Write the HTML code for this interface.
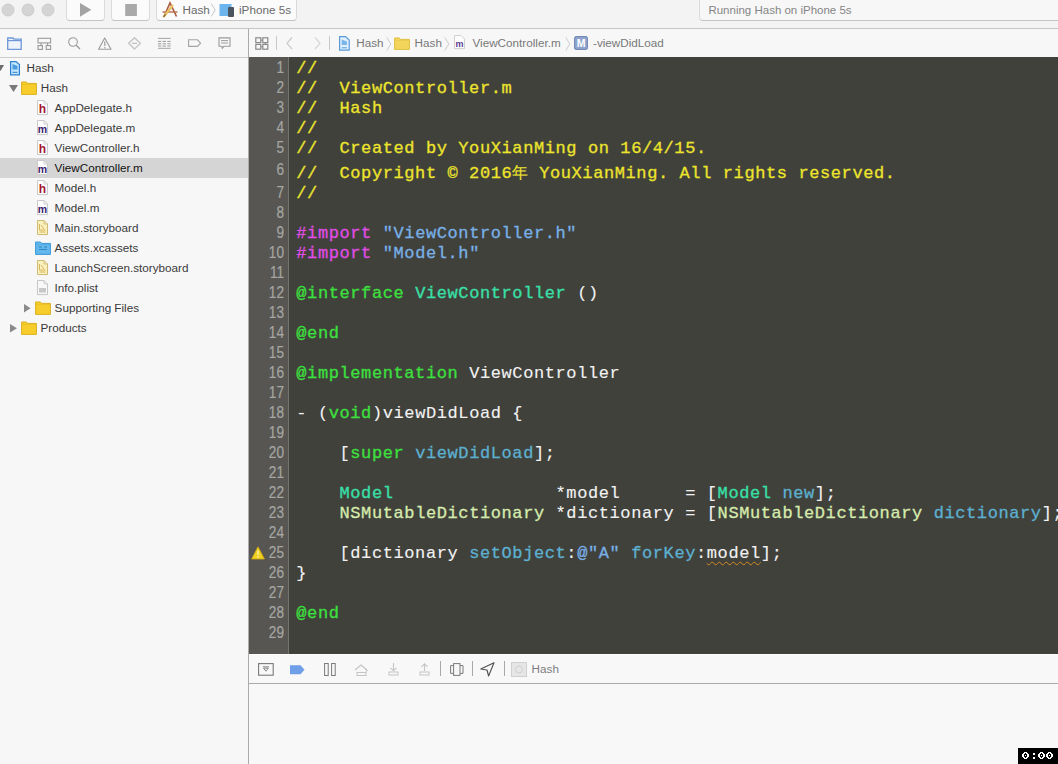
<!DOCTYPE html>
<html><head><meta charset="utf-8">
<style>
*{margin:0;padding:0;box-sizing:border-box}
html,body{width:1058px;height:764px;overflow:hidden;background:#f4f4f4;font-family:"Liberation Sans",sans-serif}
.a{position:absolute}
svg{position:absolute;overflow:visible}
#tb{left:0;top:0;width:1058px;height:29px;background:#f3f3f3;border-bottom:1px solid #c6c6c6}
#nav{left:0;top:29px;width:248px;height:29px;background:#f7f7f7;border-bottom:1px solid #cdcdcd}
#jump{left:249px;top:29px;width:809px;height:28px;background:#f7f7f7}
#vdiv{left:248px;top:29px;width:1px;height:735px;background:#ababab}
#side{left:0;top:58px;width:248px;height:706px;background:#f7f7f7}
#ed{left:249px;top:57px;width:809px;height:597px;background:#41413c}
#gut{left:249px;top:57px;width:40px;height:597px;background:#575652;border-right:1px solid #74736c}
.t{position:absolute;font-size:11.7px;color:#3a3a3a;line-height:14px;white-space:nowrap}
.g{color:#777}
.ln{position:absolute;left:249px;width:35px;text-align:right;font-size:16px;transform:scaleX(0.85);transform-origin:right center;color:#a6a6a2;line-height:20px;-webkit-text-stroke:0.2px currentColor}
.cl{position:absolute;margin-top:0.8px;left:296.3px;font-family:"Liberation Mono",monospace;font-size:17px;letter-spacing:0.6px;-webkit-text-stroke:0.12px currentColor;line-height:20px;white-space:pre;color:#f2f2f2}
.cm{-webkit-text-stroke:0.3px currentColor;color:#ede52c}
.cmcj{color:#ede52c;font-size:16px;letter-spacing:0}
.pp{-webkit-text-stroke:0.3px currentColor;color:#e04ce6}
.st{-webkit-text-stroke:0.3px currentColor;color:#78b0e6}
.kw{-webkit-text-stroke:0.3px currentColor;color:#3ce03c}
.ty{-webkit-text-stroke:0.3px currentColor;color:#38e0a8}
.fn{-webkit-text-stroke:0.3px currentColor;color:#5cb0d0}
.cls{-webkit-text-stroke:0.3px currentColor;color:#d6ebac}
.sq{text-decoration:underline wavy #d08a20;text-underline-offset:3px;text-decoration-thickness:1px}
#dbg{left:249px;top:654px;width:809px;height:30px;background:#f8f8f8;border-top:1px solid #fdfdfd;border-bottom:1px solid #ababab}
#con{left:249px;top:684px;width:809px;height:80px;background:#f8f8f8}
#timer{left:1018px;top:748px;width:40px;height:16px;background:#000}
.btn{position:absolute;top:-4px;height:25px;background:#fbfbfb;border:1px solid #dadada;border-bottom-color:#c4c4c4;border-radius:4px}
.sep{position:absolute;width:1px;background:#c9c9c9}
.sel{position:absolute;left:0;width:248px;height:20px;background:#d5d5d5}
</style></head><body>
<div id="tb" class="a"></div>
<div id="nav" class="a"></div>
<div id="jump" class="a"></div>
<div id="side" class="a"></div>
<div id="vdiv" class="a"></div>
<div id="ed" class="a"></div>
<div id="gut" class="a"></div>
<div id="dbg" class="a"></div>
<div id="con" class="a"></div>
<svg style="left:1px;top:3px" width="14" height="14" viewBox="0 0 14 14"><circle cx="7" cy="7" r="6" fill="#d4d4d4" stroke="#c6c6c6" stroke-width="0.8"/></svg>
<svg style="left:21px;top:3px" width="14" height="14" viewBox="0 0 14 14"><circle cx="7" cy="7" r="6" fill="#d4d4d4" stroke="#c6c6c6" stroke-width="0.8"/></svg>
<svg style="left:41px;top:3px" width="14" height="14" viewBox="0 0 14 14"><circle cx="7" cy="7" r="6" fill="#d4d4d4" stroke="#c6c6c6" stroke-width="0.8"/></svg>
<div class="btn" style="left:66px;width:39px"></div>
<svg style="left:79px;top:2px" width="14" height="16" viewBox="0 0 14 16"><path d="M1 1 L12.3 7.8 L1 14.7 Z" fill="#a3a3a3"/></svg>
<div class="btn" style="left:111px;width:39px"></div>
<svg style="left:125px;top:4px" width="12" height="12" viewBox="0 0 12 12"><rect x="0.2" y="0" width="11.7" height="12" fill="#a9a9a9"/></svg>
<div class="btn" style="left:156px;width:141px"></div>
<svg style="left:161px;top:1px" width="18" height="18" viewBox="0 0 18 18"><path d="M3 15.5 L9 2 L15.5 15.5" fill="none" stroke="#a85a40" stroke-width="1.6"/><path d="M1.5 11 L16.5 11" stroke="#b87050" stroke-width="1.4"/><path d="M2.5 16 L12 4" stroke="#e8c060" stroke-width="2.2"/><path d="M2.5 16 L4.5 13.5" stroke="#705030" stroke-width="1.2"/></svg>
<div class="t " style="left:182.5px;top:2.55px;font-size:11.7px;color:#6a6a6a">Hash</div>
<svg style="left:210px;top:3px" width="7" height="15" viewBox="0 0 7 15"><path d="M1.2 0.5 L5.2 7 L1.2 13.5" fill="none" stroke="#c8c8c8" stroke-width="1"/></svg>
<svg style="left:219px;top:3px" width="16" height="14" viewBox="0 0 16 14"><rect x="0.5" y="1" width="12" height="12" fill="#6cb4ec"/><rect x="9" y="4" width="6" height="10" rx="1" fill="#4a5560"/></svg>
<div class="t " style="left:239px;top:2.55px;font-size:11.7px;color:#6a6a6a">iPhone 5s</div>
<div class="btn" style="left:699px;width:400px;background:#f7f7f7"></div>
<div class="t " style="left:708.4px;top:3.33px;font-size:11.5px;color:#858585">Running Hash on iPhone 5s</div>
<svg style="left:7px;top:37px" width="15" height="13" viewBox="0 0 15 13"><path d="M0.7 1 H6 L7 2.2 H14.2 V12.3 H0.7 Z" fill="#eef3fb" stroke="#6d98d8" stroke-width="1.3"/><path d="M0.7 3.6 H14.2" stroke="#6d98d8" stroke-width="1.2"/></svg>
<svg style="left:37px;top:37px" width="15" height="13" viewBox="0 0 15 13"><rect x="1" y="1.3" width="12.6" height="4.6" fill="none" stroke="#9a9a9a" stroke-width="1.1"/><path d="M4 6 V8.3 M10.6 6 V8.3" stroke="#9a9a9a" stroke-width="1.1"/><rect x="1" y="8.6" width="4.4" height="3.8" fill="none" stroke="#9a9a9a" stroke-width="1.1"/><rect x="9.2" y="8.6" width="4.4" height="3.8" fill="none" stroke="#9a9a9a" stroke-width="1.1"/></svg>
<svg style="left:68px;top:37px" width="13" height="13" viewBox="0 0 13 13"><circle cx="5" cy="5" r="4.3" fill="none" stroke="#9a9a9a" stroke-width="1.1"/><path d="M8.2 8.2 L12 12" stroke="#9a9a9a" stroke-width="1.3"/></svg>
<svg style="left:98px;top:37px" width="14" height="13" viewBox="0 0 14 13"><path d="M6.7 1 L13 12.3 H0.6 Z" fill="none" stroke="#9a9a9a" stroke-width="1.1" stroke-linejoin="round"/><path d="M6.8 4.5 V9" stroke="#9a9a9a" stroke-width="1.2"/><circle cx="6.8" cy="10.7" r="0.7" fill="#9a9a9a"/></svg>
<svg style="left:128px;top:37px" width="14" height="13" viewBox="0 0 14 13"><path d="M6.5 0.8 L12.4 6.3 L6.5 12 L0.6 6.3 Z" fill="none" stroke="#c4c4c4" stroke-width="1.4" stroke-linejoin="round"/><path d="M4 6.3 H9" stroke="#b8b8b8" stroke-width="1.1"/></svg>
<svg style="left:157px;top:37px" width="15" height="13" viewBox="0 0 15 13"><path d="M1 1.4 H13.6 M1 11.3 H13.6" stroke="#9a9a9a" stroke-width="0.9"/><path d="M1 4.4 H4.3 M5.6 4.4 H9 M10.3 4.4 H13.6 M1 6.8 H4.3 M5.6 6.8 H9 M10.3 6.8 H13.6 M1 9 H4.3 M5.6 9 H9 M10.3 9 H13.6" stroke="#9a9a9a" stroke-width="1"/></svg>
<svg style="left:188px;top:39px" width="14" height="9" viewBox="0 0 14 9"><path d="M0.6 0.8 H9.5 L12.6 4.2 L9.5 7.4 H0.6 Z" fill="none" stroke="#a4a4a4" stroke-width="1.1"/></svg>
<svg style="left:218px;top:37px" width="13" height="13" viewBox="0 0 13 13"><path d="M1 0.9 H12 V9.3 H5.8 L4.3 11.3 L3.8 9.3 H1 Z" fill="none" stroke="#9a9a9a" stroke-width="1.1"/><path d="M3 3.6 H10 M3 6 H10" stroke="#9a9a9a" stroke-width="1"/></svg>
<div class="sel" style="top:158px"></div>
<svg style="left:-3px;top:65px" width="7" height="6" viewBox="0 0 7 6"><path d="M0 0 H7 L3.5 6 Z" fill="#6e6e6e"/></svg>
<svg style="left:10px;top:61px" width="10" height="15" viewBox="0 0 10 15"><path d="M0.6 0.6 H6 L9.4 3.5 V13.8 H0.6 Z" fill="#c4e8ff" stroke="#2c80d0" stroke-width="1.2"/><path d="M2.5 3 V8.5 H7.5 V5" fill="#4a9ae0" stroke="none"/><path d="M2.5 11.3 H7.5" stroke="#2c80d0" stroke-width="1"/></svg>
<div class="t " style="left:26.5px;top:60.65px;font-size:11.7px">Hash</div>
<svg style="left:9px;top:85px" width="9" height="7" viewBox="0 0 9 7"><path d="M0 0 H9 L4.5 7 Z" fill="#7a7a7a"/></svg>
<svg style="left:21px;top:81px" width="16" height="14" viewBox="0 0 16 14"><path d="M0.6 1 H5.5 L6.5 2.4 H15.4 V13.4 H0.6 Z" fill="#f6cd2a" stroke="#dcb020" stroke-width="1"/><path d="M0.6 3.4 H15.4" stroke="#dcb020" stroke-width="0.6" opacity="0.6"/></svg>
<div class="t " style="left:40.8px;top:80.65px;font-size:11.7px">Hash</div>
<svg style="left:37.3px;top:100.2px" width="11" height="15" viewBox="0 0 11 15"><path d="M0.5 0.5 H7 L10.5 4 V14.6 H0.5 Z" fill="#fdfdfd" stroke="#c9c9c9" stroke-width="1"/><path d="M7 0.5 V4 H10.5" fill="none" stroke="#c9c9c9" stroke-width="0.8"/><text x="5.5" y="12.6" text-anchor="middle" font-family="Liberation Sans" font-weight="bold" font-size="12" fill="#a3142d">h</text></svg>
<div class="t " style="left:54.6px;top:100.65px;font-size:11.7px">AppDelegate.h</div>
<svg style="left:37.3px;top:120.2px" width="11" height="15" viewBox="0 0 11 15"><path d="M0.5 0.5 H7 L10.5 4 V14.6 H0.5 Z" fill="#fdfdfd" stroke="#c9c9c9" stroke-width="1"/><path d="M7 0.5 V4 H10.5" fill="none" stroke="#c9c9c9" stroke-width="0.8"/><text x="5.5" y="12.8" text-anchor="middle" font-family="Liberation Sans" font-weight="bold" font-size="10.5" fill="#3b2170">m</text></svg>
<div class="t " style="left:54.6px;top:120.65px;font-size:11.7px">AppDelegate.m</div>
<svg style="left:37.3px;top:140.2px" width="11" height="15" viewBox="0 0 11 15"><path d="M0.5 0.5 H7 L10.5 4 V14.6 H0.5 Z" fill="#fdfdfd" stroke="#c9c9c9" stroke-width="1"/><path d="M7 0.5 V4 H10.5" fill="none" stroke="#c9c9c9" stroke-width="0.8"/><text x="5.5" y="12.6" text-anchor="middle" font-family="Liberation Sans" font-weight="bold" font-size="12" fill="#a3142d">h</text></svg>
<div class="t " style="left:54.6px;top:140.65px;font-size:11.7px">ViewController.h</div>
<svg style="left:37.3px;top:160.2px" width="11" height="15" viewBox="0 0 11 15"><path d="M0.5 0.5 H7 L10.5 4 V14.6 H0.5 Z" fill="#fdfdfd" stroke="#c9c9c9" stroke-width="1"/><path d="M7 0.5 V4 H10.5" fill="none" stroke="#c9c9c9" stroke-width="0.8"/><text x="5.5" y="12.8" text-anchor="middle" font-family="Liberation Sans" font-weight="bold" font-size="10.5" fill="#3b2170">m</text></svg>
<div class="t " style="left:54.6px;top:160.65px;font-size:11.7px;color:#111">ViewController.m</div>
<svg style="left:37.3px;top:180.2px" width="11" height="15" viewBox="0 0 11 15"><path d="M0.5 0.5 H7 L10.5 4 V14.6 H0.5 Z" fill="#fdfdfd" stroke="#c9c9c9" stroke-width="1"/><path d="M7 0.5 V4 H10.5" fill="none" stroke="#c9c9c9" stroke-width="0.8"/><text x="5.5" y="12.6" text-anchor="middle" font-family="Liberation Sans" font-weight="bold" font-size="12" fill="#a3142d">h</text></svg>
<div class="t " style="left:54.6px;top:180.65px;font-size:11.7px">Model.h</div>
<svg style="left:37.3px;top:200.2px" width="11" height="15" viewBox="0 0 11 15"><path d="M0.5 0.5 H7 L10.5 4 V14.6 H0.5 Z" fill="#fdfdfd" stroke="#c9c9c9" stroke-width="1"/><path d="M7 0.5 V4 H10.5" fill="none" stroke="#c9c9c9" stroke-width="0.8"/><text x="5.5" y="12.8" text-anchor="middle" font-family="Liberation Sans" font-weight="bold" font-size="10.5" fill="#3b2170">m</text></svg>
<div class="t " style="left:54.6px;top:200.65px;font-size:11.7px">Model.m</div>
<svg style="left:37.3px;top:220.2px" width="11" height="15" viewBox="0 0 11 15"><path d="M0.5 0.5 H7 L10.5 4 V14.6 H0.5 Z" fill="#faf0c0" stroke="#cfb870" stroke-width="1"/><path d="M7 0.5 V4 H10.5" fill="none" stroke="#cfb870" stroke-width="0.8"/><path d="M2.5 4 V10 H8.5 M2.5 12 H8.5" fill="none" stroke="#d6b65a" stroke-width="1"/><path d="M4 5 L7 9" stroke="#d6b65a" stroke-width="1"/></svg>
<div class="t " style="left:54.6px;top:220.65px;font-size:11.7px">Main.storyboard</div>
<svg style="left:35px;top:241px" width="16" height="14" viewBox="0 0 16 14"><path d="M0.6 1 H5.5 L6.5 2.4 H15.4 V13.4 H0.6 Z" fill="#62b8ec" stroke="#3a98d8" stroke-width="1"/><path d="M0.6 3.4 H15.4" stroke="#3a98d8" stroke-width="0.6" opacity="0.6"/></svg>
<svg style="left:38px;top:246px" width="10" height="6" viewBox="0 0 10 6"><path d="M1 1 H4 M6 1 H9 M1 3.5 H9" stroke="#2a78b8" stroke-width="0.8"/></svg>
<div class="t " style="left:54.6px;top:240.65px;font-size:11.7px">Assets.xcassets</div>
<svg style="left:37.3px;top:260.2px" width="11" height="15" viewBox="0 0 11 15"><path d="M0.5 0.5 H7 L10.5 4 V14.6 H0.5 Z" fill="#faf0c0" stroke="#cfb870" stroke-width="1"/><path d="M7 0.5 V4 H10.5" fill="none" stroke="#cfb870" stroke-width="0.8"/><path d="M2.5 4 V10 H8.5 M2.5 12 H8.5" fill="none" stroke="#d6b65a" stroke-width="1"/><path d="M4 5 L7 9" stroke="#d6b65a" stroke-width="1"/></svg>
<div class="t " style="left:54.6px;top:260.65px;font-size:11.7px">LaunchScreen.storyboard</div>
<svg style="left:37.3px;top:280.2px" width="11" height="15" viewBox="0 0 11 15"><path d="M0.5 0.5 H7 L10.5 4 V14.6 H0.5 Z" fill="#f8f8f8" stroke="#c6c6c6" stroke-width="1"/><path d="M7 0.5 V4 H10.5" fill="none" stroke="#c6c6c6" stroke-width="0.8"/><rect x="2" y="8" width="7" height="4.5" fill="#c8c8c8"/></svg>
<div class="t " style="left:54.6px;top:280.65px;font-size:11.7px">Info.plist</div>
<svg style="left:24.2px;top:304.2px" width="6.6" height="8.5" viewBox="0 0 6.6 8.5"><path d="M0 0 L6.6 4.25 L0 8.5 Z" fill="#8a8a8a"/></svg>
<svg style="left:34.7px;top:301px" width="16" height="14" viewBox="0 0 16 14"><path d="M0.6 1 H5.5 L6.5 2.4 H15.4 V13.4 H0.6 Z" fill="#f6cd2a" stroke="#dcb020" stroke-width="1"/><path d="M0.6 3.4 H15.4" stroke="#dcb020" stroke-width="0.6" opacity="0.6"/></svg>
<div class="t " style="left:54.6px;top:300.65px;font-size:11.7px">Supporting Files</div>
<svg style="left:10px;top:324px" width="7" height="8.6" viewBox="0 0 7 8.6"><path d="M0 0 L7 4.3 L0 8.6 Z" fill="#8a8a8a"/></svg>
<svg style="left:20.7px;top:321px" width="16" height="14" viewBox="0 0 16 14"><path d="M0.6 1 H5.5 L6.5 2.4 H15.4 V13.4 H0.6 Z" fill="#f6cd2a" stroke="#dcb020" stroke-width="1"/><path d="M0.6 3.4 H15.4" stroke="#dcb020" stroke-width="0.6" opacity="0.6"/></svg>
<div class="t " style="left:40.5px;top:320.65px;font-size:11.7px">Products</div>
<svg style="left:254.5px;top:37px" width="14" height="13" viewBox="0 0 14 13"><rect x="0.8" y="0.8" width="5" height="4.8" fill="none" stroke="#8a8a8a" stroke-width="1.2"/><rect x="7.8" y="0.8" width="5" height="4.8" fill="none" stroke="#8a8a8a" stroke-width="1.2"/><rect x="0.8" y="7.4" width="5" height="4.8" fill="none" stroke="#8a8a8a" stroke-width="1.2"/><rect x="7.8" y="7.4" width="5" height="4.8" fill="none" stroke="#8a8a8a" stroke-width="1.2"/><path d="M5.8 3.2 H7.8 M5.8 9.8 H7.8 M10.3 5.6 V7.4" stroke="#8a8a8a" stroke-width="1"/></svg>
<div class="sep" style="left:276px;top:36px;height:14px"></div>
<svg style="left:286px;top:37px" width="7" height="13" viewBox="0 0 7 13"><path d="M6 0.5 L1 6.3 L6 12" fill="none" stroke="#cacaca" stroke-width="1.2"/></svg>
<svg style="left:314px;top:37px" width="7" height="13" viewBox="0 0 7 13"><path d="M1 0.5 L6 6.3 L1 12" fill="none" stroke="#d6d6d6" stroke-width="1.2"/></svg>
<div class="sep" style="left:329px;top:36px;height:14px"></div>
<svg style="left:338.5px;top:36px" width="11" height="15" viewBox="0 0 11 15"><path d="M0.6 0.6 H6.5 L10.2 4 V14.2 H0.6 Z" fill="#dff1ff" stroke="#5a9ad8" stroke-width="1.2"/><path d="M2.7 3.5 V9 H8 V5.5" fill="#7ab6e8"/><path d="M2.7 11.8 H8" stroke="#5a9ad8" stroke-width="1"/></svg>
<div class="t " style="left:356.2px;top:35.75px;font-size:11.7px;color:#777">Hash</div>
<svg style="left:385.5px;top:36.5px" width="6" height="14" viewBox="0 0 6 14"><path d="M0.8 0.5 L4.8 7.0 L0.8 13.5" fill="none" stroke="#cdcdcd" stroke-width="1"/></svg>
<svg style="left:394px;top:37px" width="16" height="13" viewBox="0 0 16 13"><path d="M0.6 1 H5.5 L6.5 2.4 H15.4 V12.4 H0.6 Z" fill="#f2d55a" stroke="#e0c040" stroke-width="1"/><path d="M0.6 3.4 H15.4" stroke="#e0c040" stroke-width="0.6" opacity="0.6"/></svg>
<div class="t " style="left:414.6px;top:35.75px;font-size:11.7px;color:#777">Hash</div>
<svg style="left:443.5px;top:36.5px" width="6" height="14" viewBox="0 0 6 14"><path d="M0.8 0.5 L4.8 7.0 L0.8 13.5" fill="none" stroke="#cdcdcd" stroke-width="1"/></svg>
<svg style="left:454.4px;top:35px" width="11" height="14" viewBox="0 0 11 14"><path d="M0.5 0.5 H7 L10.5 4 V13.6 H0.5 Z" fill="#fdfdfd" stroke="#d0d0d0" stroke-width="1"/><text x="5.5" y="12" text-anchor="middle" font-family="Liberation Sans" font-weight="bold" font-size="9" fill="#5a3a90">m</text></svg>
<div class="t " style="left:472.5px;top:35.75px;font-size:11.7px;color:#777">ViewController.m</div>
<svg style="left:564.5px;top:36.5px" width="6" height="14" viewBox="0 0 6 14"><path d="M0.8 0.5 L4.8 7.0 L0.8 13.5" fill="none" stroke="#cdcdcd" stroke-width="1"/></svg>
<svg style="left:573.5px;top:36px" width="14" height="14" viewBox="0 0 14 14"><rect x="0.6" y="0.6" width="12.8" height="12.8" rx="1.5" fill="#90a6d0" stroke="#6a80b0" stroke-width="1"/><text x="7" y="11.3" text-anchor="middle" font-family="Liberation Sans" font-weight="bold" font-size="10.5" fill="#fff">M</text></svg>
<div class="t " style="left:593px;top:35.75px;font-size:11.7px;color:#777">-viewDidLoad</div>
<svg style="left:257.5px;top:662.5px" width="16" height="13" viewBox="0 0 16 13"><rect x="0.6" y="0.6" width="14.6" height="11.6" fill="none" stroke="#7a7a7a" stroke-width="1.1"/><path d="M4.8 3.8 H11 M5.5 5.2 L7.9 8.2 L10.3 5.2 Z" fill="none" stroke="#7a7a7a" stroke-width="0.9"/></svg>
<svg style="left:290px;top:664.5px" width="15" height="10" viewBox="0 0 15 10"><path d="M0 0.3 H10.5 L14.5 4.7 L10.5 9.2 H0 Z" fill="#6f9fe6"/></svg>
<svg style="left:323.5px;top:663px" width="12" height="13" viewBox="0 0 12 13"><rect x="0.6" y="0.5" width="3.6" height="12" fill="none" stroke="#7a7a7a" stroke-width="1"/><rect x="7.6" y="0.5" width="3.6" height="12" fill="none" stroke="#7a7a7a" stroke-width="1"/></svg>
<svg style="left:354px;top:664px" width="15" height="12" viewBox="0 0 15 12"><path d="M1 6 L7 1 L13 6" fill="none" stroke="#c4c4c4" stroke-width="1.1"/><path d="M11 5 L13.5 6.5 L11.5 8" fill="none" stroke="#c4c4c4" stroke-width="1"/><rect x="3" y="8.5" width="9" height="3" fill="none" stroke="#c4c4c4" stroke-width="1"/></svg>
<svg style="left:388px;top:663px" width="11" height="13" viewBox="0 0 11 13"><path d="M5.5 0 V7.5 M2.5 4.8 L5.5 7.8 L8.5 4.8" fill="none" stroke="#c4c4c4" stroke-width="1.1"/><rect x="1" y="9" width="9" height="3" fill="none" stroke="#c4c4c4" stroke-width="1"/></svg>
<svg style="left:419px;top:663px" width="11" height="13" viewBox="0 0 11 13"><path d="M5.5 8 V0.8 M2.5 3.8 L5.5 0.8 L8.5 3.8" fill="none" stroke="#c4c4c4" stroke-width="1.1"/><rect x="1" y="9" width="9" height="3" fill="none" stroke="#c4c4c4" stroke-width="1"/></svg>
<div class="sep" style="left:440px;top:661px;height:15px;background:#a8a8a8"></div>
<svg style="left:449.5px;top:662.5px" width="14" height="13" viewBox="0 0 14 13"><rect x="3.6" y="0.6" width="6.4" height="11.8" fill="none" stroke="#7a7a7a" stroke-width="1"/><path d="M3.6 2.6 H0.6 V10.4 H3.6 M10 2.6 H13 V10.4 H10" fill="none" stroke="#7a7a7a" stroke-width="1"/></svg>
<div class="sep" style="left:472px;top:661px;height:15px;background:#a8a8a8"></div>
<svg style="left:480px;top:661.5px" width="15" height="15" viewBox="0 0 15 15"><path d="M14 0.8 L0.8 7 L7 8 L8.6 14 Z" fill="none" stroke="#505050" stroke-width="1.1" stroke-linejoin="round"/></svg>
<div class="sep" style="left:504px;top:661px;height:15px;background:#a8a8a8"></div>
<svg style="left:511px;top:661.5px" width="16" height="15" viewBox="0 0 16 15"><rect x="0.5" y="0.5" width="15" height="14" fill="#e6e6e6" stroke="#d0d0d0" stroke-width="1"/><circle cx="8" cy="7.5" r="3.5" fill="none" stroke="#cfcfcf" stroke-width="1"/></svg>
<div class="t " style="left:531.6px;top:661.55px;font-size:11.7px;color:#7e7e7e">Hash</div>
<div class="ln" style="top:57.5px">1</div>
<div class="cl" style="top:58px"><span class="cm">//</span></div>
<div class="ln" style="top:77.5px">2</div>
<div class="cl" style="top:78px"><span class="cm">//  ViewController.m</span></div>
<div class="ln" style="top:97.5px">3</div>
<div class="cl" style="top:98px"><span class="cm">//  Hash</span></div>
<div class="ln" style="top:117.5px">4</div>
<div class="cl" style="top:118px"><span class="cm">//</span></div>
<div class="ln" style="top:137.5px">5</div>
<div class="cl" style="top:138px"><span class="cm">//  Created by YouXianMing on 16/4/15.</span></div>
<div class="ln" style="top:159.8px">6</div>
<div class="cl" style="top:162.8px"><span class="cm">//  Copyright © 2016</span><span class="cmcj">年</span><span class="cm"> YouXianMing. All rights reserved.</span></div>
<div class="ln" style="top:182.5px">7</div>
<div class="cl" style="top:183px"><span class="cm">//</span></div>
<div class="ln" style="top:202.8px">8</div>
<div class="ln" style="top:222.8px">9</div>
<div class="cl" style="top:223.3px"><span class="pp">#import</span> <span class="st">&quot;ViewController.h&quot;</span></div>
<div class="ln" style="top:242.8px">10</div>
<div class="cl" style="top:243.3px"><span class="pp">#import</span> <span class="st">&quot;Model.h&quot;</span></div>
<div class="ln" style="top:262.8px">11</div>
<div class="ln" style="top:282.8px">12</div>
<div class="cl" style="top:283.3px"><span class="kw">@interface</span> <span class="ty">ViewController</span> ()</div>
<div class="ln" style="top:302.8px">13</div>
<div class="ln" style="top:322.8px">14</div>
<div class="cl" style="top:323.3px"><span class="kw">@end</span></div>
<div class="ln" style="top:342.8px">15</div>
<div class="ln" style="top:362.8px">16</div>
<div class="cl" style="top:363.3px"><span class="kw">@implementation</span> ViewController</div>
<div class="ln" style="top:382.8px">17</div>
<div class="ln" style="top:402.8px">18</div>
<div class="cl" style="top:403.3px">- (<span class="kw">void</span>)viewDidLoad {</div>
<div class="ln" style="top:422.8px">19</div>
<div class="ln" style="top:442.8px">20</div>
<div class="cl" style="top:443.3px">    [<span class="kw">super</span> <span class="fn">viewDidLoad</span>];</div>
<div class="ln" style="top:462.8px">21</div>
<div class="ln" style="top:482.8px">22</div>
<div class="cl" style="top:483.3px">    <span class="ty">Model</span>               *model      = [<span class="ty">Model</span> <span class="fn">new</span>];</div>
<div class="ln" style="top:502.8px">23</div>
<div class="cl" style="top:503.3px">    <span class="cls">NSMutableDictionary</span> *dictionary = [<span class="cls">NSMutableDictionary</span> <span class="fn">dictionary</span>];</div>
<div class="ln" style="top:522.8px">24</div>
<div class="ln" style="top:542.8px">25</div>
<div class="cl" style="top:543.3px">    [dictionary <span class="fn">setObject</span>:<span class="st">@&quot;A&quot;</span> <span class="fn">forKey</span>:<span class="sq">model</span>];</div>
<div class="ln" style="top:562.8px">26</div>
<div class="cl" style="top:563.3px">}</div>
<div class="ln" style="top:582.8px">27</div>
<div class="ln" style="top:602.8px">28</div>
<div class="cl" style="top:603.3px"><span class="kw">@end</span></div>
<div class="ln" style="top:622.8px">29</div>
<div id="timer" class="a"></div>
<svg style="left:1022px;top:752px" width="31" height="7" viewBox="0 0 31 7"><g fill="#fff" shape-rendering="crispEdges"><rect x="2" y="0" width="1" height="1"/><rect x="3" y="0" width="1" height="1"/><rect x="4" y="0" width="1" height="1"/><rect x="1" y="1" width="1" height="1"/><rect x="2" y="1" width="1" height="1"/><rect x="4" y="1" width="1" height="1"/><rect x="5" y="1" width="1" height="1"/><rect x="0" y="2" width="1" height="1"/><rect x="1" y="2" width="1" height="1"/><rect x="5" y="2" width="1" height="1"/><rect x="6" y="2" width="1" height="1"/><rect x="0" y="3" width="1" height="1"/><rect x="1" y="3" width="1" height="1"/><rect x="3" y="3" width="1" height="1"/><rect x="5" y="3" width="1" height="1"/><rect x="6" y="3" width="1" height="1"/><rect x="0" y="4" width="1" height="1"/><rect x="1" y="4" width="1" height="1"/><rect x="5" y="4" width="1" height="1"/><rect x="6" y="4" width="1" height="1"/><rect x="1" y="5" width="1" height="1"/><rect x="2" y="5" width="1" height="1"/><rect x="4" y="5" width="1" height="1"/><rect x="5" y="5" width="1" height="1"/><rect x="2" y="6" width="1" height="1"/><rect x="3" y="6" width="1" height="1"/><rect x="4" y="6" width="1" height="1"/><rect x="11" y="1" width="2" height="2"/><rect x="11" y="5" width="2" height="2"/><rect x="18" y="0" width="1" height="1"/><rect x="19" y="0" width="1" height="1"/><rect x="20" y="0" width="1" height="1"/><rect x="17" y="1" width="1" height="1"/><rect x="18" y="1" width="1" height="1"/><rect x="20" y="1" width="1" height="1"/><rect x="21" y="1" width="1" height="1"/><rect x="16" y="2" width="1" height="1"/><rect x="17" y="2" width="1" height="1"/><rect x="21" y="2" width="1" height="1"/><rect x="22" y="2" width="1" height="1"/><rect x="16" y="3" width="1" height="1"/><rect x="17" y="3" width="1" height="1"/><rect x="19" y="3" width="1" height="1"/><rect x="21" y="3" width="1" height="1"/><rect x="22" y="3" width="1" height="1"/><rect x="16" y="4" width="1" height="1"/><rect x="17" y="4" width="1" height="1"/><rect x="21" y="4" width="1" height="1"/><rect x="22" y="4" width="1" height="1"/><rect x="17" y="5" width="1" height="1"/><rect x="18" y="5" width="1" height="1"/><rect x="20" y="5" width="1" height="1"/><rect x="21" y="5" width="1" height="1"/><rect x="18" y="6" width="1" height="1"/><rect x="19" y="6" width="1" height="1"/><rect x="20" y="6" width="1" height="1"/><rect x="26" y="0" width="1" height="1"/><rect x="27" y="0" width="1" height="1"/><rect x="28" y="0" width="1" height="1"/><rect x="25" y="1" width="1" height="1"/><rect x="26" y="1" width="1" height="1"/><rect x="28" y="1" width="1" height="1"/><rect x="29" y="1" width="1" height="1"/><rect x="24" y="2" width="1" height="1"/><rect x="25" y="2" width="1" height="1"/><rect x="29" y="2" width="1" height="1"/><rect x="30" y="2" width="1" height="1"/><rect x="24" y="3" width="1" height="1"/><rect x="25" y="3" width="1" height="1"/><rect x="27" y="3" width="1" height="1"/><rect x="29" y="3" width="1" height="1"/><rect x="30" y="3" width="1" height="1"/><rect x="24" y="4" width="1" height="1"/><rect x="25" y="4" width="1" height="1"/><rect x="29" y="4" width="1" height="1"/><rect x="30" y="4" width="1" height="1"/><rect x="25" y="5" width="1" height="1"/><rect x="26" y="5" width="1" height="1"/><rect x="28" y="5" width="1" height="1"/><rect x="29" y="5" width="1" height="1"/><rect x="26" y="6" width="1" height="1"/><rect x="27" y="6" width="1" height="1"/><rect x="28" y="6" width="1" height="1"/></g></svg><svg style="left:250.5px;top:545.5px" width="14" height="14" viewBox="0 0 14 14"><path d="M7 0.8 L13.4 13 H0.6 Z" fill="#f0d020" stroke="#d0a810" stroke-width="0.8" stroke-linejoin="round"/><path d="M7 4.5 V9" stroke="#f8ec90" stroke-width="1.6"/><circle cx="7" cy="11" r="0.9" fill="#f8ec90"/></svg>
</body></html>
